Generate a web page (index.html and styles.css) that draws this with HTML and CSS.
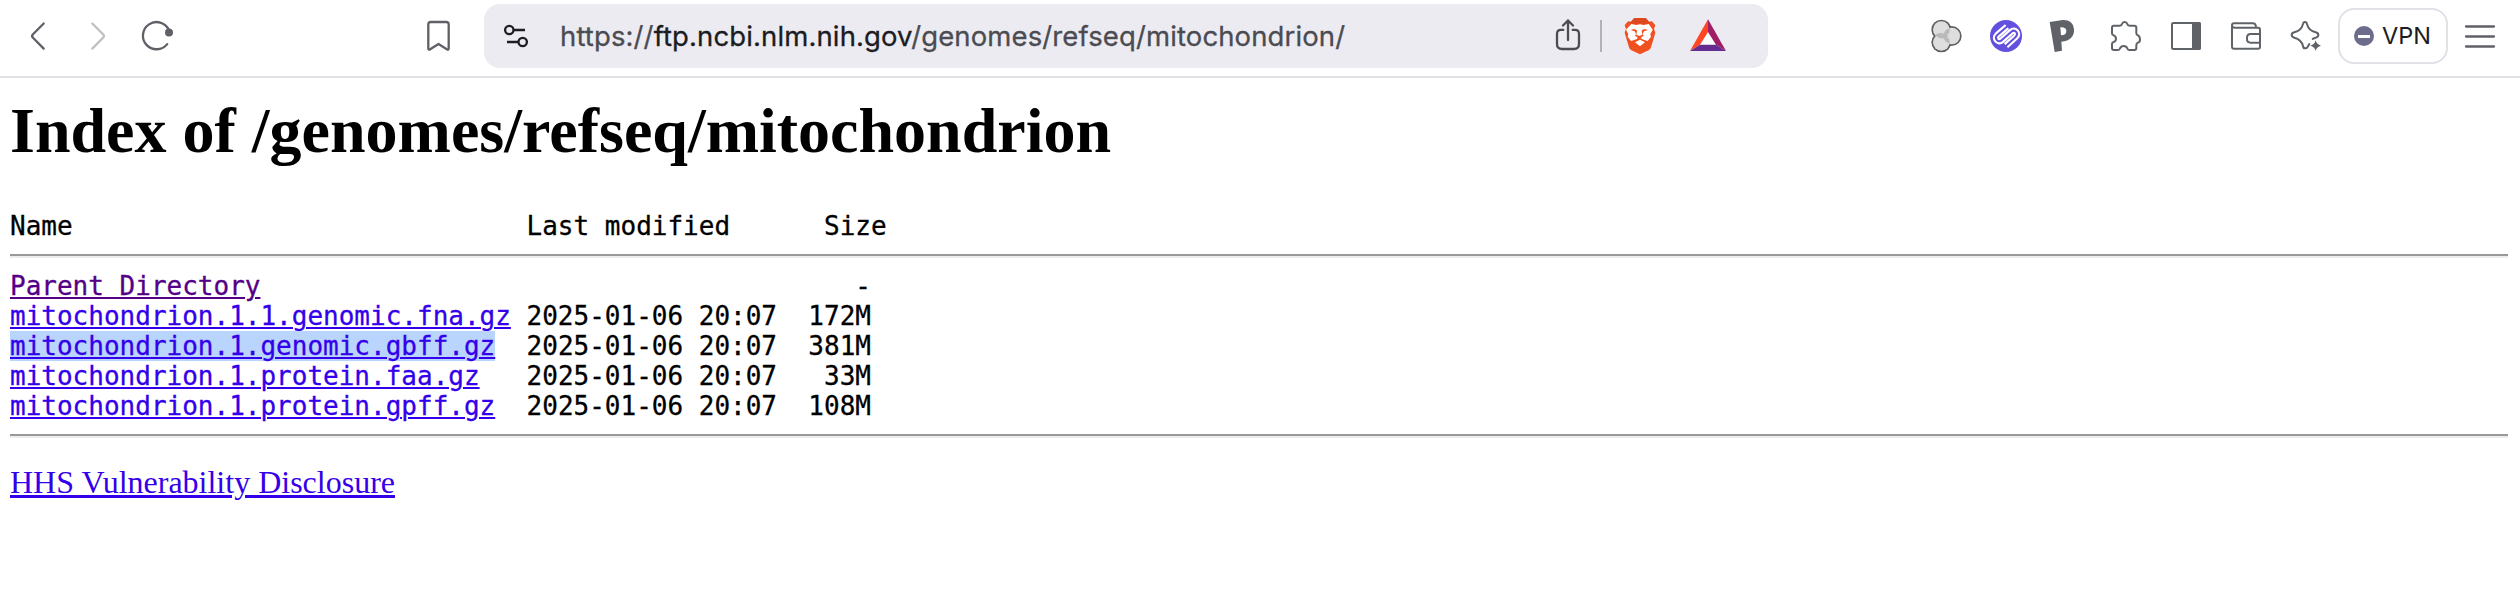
FILE: index.html
```html
<!DOCTYPE html>
<html lang="en">
<head>
<meta charset="utf-8">
<title>Index of /genomes/refseq/mitochondrion</title>
<link rel="stylesheet" href="styles.css">
</head>
<body>
<header class="toolbar">
  <nav class="group">
    <svg class="icon" viewBox="0 0 60 60"><path d="M35.700 17.500 25 28.200q-1.800 1.800 0 3.600L35.700 42.600"/></svg>
    <svg class="icon icon-disabled" viewBox="0 0 60 60"><path d="M24.300 17.500 35 28.200q1.800 1.800 0 3.600L24.300 42.600"/></svg>
    <svg class="icon" viewBox="0 0 60 60"><path d="M39.200 38.100A13.600 13.600 0 1 1 40.900 24"/><circle class="solid" cx="41" cy="26.500" r="4"/></svg>
  </nav>
  <svg class="icon bookmark" viewBox="0 0 60 60"><path d="M20.300 18.500q0-2.500 2.500-2.500h15.400q2.500 0 2.500 2.500v23.800q0 2.200-1.900.9L30.500 38l-8.300 5.200q-1.900 1.300-1.900-.9z"/></svg>
  <div class="address">
    <svg class="icon tune" viewBox="0 0 60 60"><circle cx="25.300" cy="24" r="4.200"/><path d="M29.500 24H41M23 36h11.500"/><circle cx="38.700" cy="36" r="4.200"/></svg>
    <span class="url">https://<span class="host">ftp.ncbi.nlm.nih.gov</span>/genomes/refseq/mitochondrion/</span>
    <svg class="icon share" viewBox="0 0 60 60"><path d="M25.300 23.900h-2.300q-4 0-4 4V38q0 5 5 5h12q5 0 5-5V27.900q0-4-4-4h-2.300M30 34V14.500M25 19.500l5-5 5 5"/></svg>
    <span class="divider"></span>
    <svg class="icon brave" viewBox="0 0 60 60"><g class="art" transform="translate(-110 -6) scale(.33333)">
      <path fill="#f1501f" d="M403 54h34l10 11 9-1 10 12-4 10 4 12-13 44q-2 6-7 9l-26 12-26-12q-5-3-7-9l-13-44 4-12-4-10 10-12 9 1z"/>
      <path fill="#dd4a20" d="M403 54h34l10 11 7 2-15 4-19-1-19 1-15-4 7-2z"/>
      <path fill="#fff" d="m394 72 15 3 11-2 11 2 15-3 12 17-7 14 2 7-10 13-12-4-7-3v-5l7-3-3-6 4-8 12-4-10-3-9 4 2 13-9 4-9-4 2-13-9-4-10 3 12 4 4 8-3 6 7 3v5l-7 3-12 4-10-13 2-7-7-14z"/>
      <path fill="#fff" d="m420 119 15 8-15 12-15-12z"/>
    </g></svg>
    <svg class="icon bat" viewBox="0 0 60 60"><g class="art" transform="translate(-178 -6) scale(.33333)">
      <path fill="#fff" d="m624 90 27 48h-54z"/><path fill="#ff4724" d="M624 58v38l-24 38-30 19z"/><path fill="#9e1f63" d="m624 58 54 95-30-19-24-38z"/><path fill="#662d91" d="m570 153 30-19h48l30 19z"/>
    </g></svg>
  </div>
  <div class="group extensions">
    <svg class="icon" viewBox="0 0 60 60"><g class="art" transform="translate(-16 -6) scale(.33333)">
      <g fill="#606060"><circle cx="124" cy="89" r="30"/><circle cx="155" cy="108" r="30"/><circle cx="124" cy="127" r="30"/></g>
      <g fill="#dedede"><circle cx="124" cy="89" r="25"/><circle cx="155" cy="108" r="25"/><circle cx="124" cy="127" r="25"/><path d="M112 90h24v36h-24z"/></g>
      <g fill="#bababa"><path d="M104 105q21-13 43 3-21 16-43-3z"/><path d="M131 107q0-18 18-22v8q0 11-18 14zM131 109q0 18 18 22v-8q0-11-18-14z"/></g>
    </g></svg>
    <svg class="icon" viewBox="0 0 60 60"><g class="art" transform="translate(-76 -6) scale(.33333)">
      <circle cx="318" cy="108" r="48" fill="#6450df"/>
      <g fill="none" stroke-linecap="butt">
        <path stroke="#fff" stroke-width="19" d="m321 80-29 25c-11 10 3 25 13 16l29-26c11-9 24 6 13 16l-29 26"/>
        <path stroke="#6450df" stroke-width="6" d="m324 77-32 28c-11 10 3 25 13 16l29-26c11-9 24 6 13 16l-32 29"/>
      </g>
    </g></svg>
    <svg class="icon" viewBox="0 0 60 60"><g class="art" transform="translate(-136 -6) scale(.33333)">
      <path fill="#5f6368" fill-rule="evenodd" d="m449 66 39-6q31-1 34 27 2 34-38 38l2 27-22 4zm32 16 2 24q16 0 16-13 0-12-18-11z"/>
    </g></svg>
    <svg class="icon" viewBox="0 0 60 60"><g class="art outline" transform="translate(-196 -6) scale(.33333)">
      <path d="M641 77h18q6 0 7-5 2-6 8-6t8 6q1 5 7 5h14q6 0 6 6v17q0 5 5 6 6 3 6 13 0 7-6 9-5 2-5 7v9q0 6-6 6h-15q-5 0-6-5-3-7-11-7t-11 7q-1 5-6 5h-12q-6 0-6-6v-12q0-5 5-6 7-3 7-10t-7-10q-5-1-5-6V83q0-6 5-6z"/>
    </g></svg>
    <svg class="icon" viewBox="0 0 60 60"><g class="art outline" transform="translate(-256 -6) scale(.33333)">
      <rect x="816" y="69" width="84" height="78" rx="4"/><path fill="#5f6368" d="M879 69h18q3 0 3 3v72q0 3-3 3h-18z"/>
    </g></svg>
    <svg class="icon" viewBox="0 0 60 60"><g class="art outline" transform="translate(-16 -6) scale(.33333)">
      <path d="M96 76q0-6 6-6h56q10 0 10 13M96 76q0 7 7 7h71q6 0 6 6v51q0 6-6 6h-72q-6 0-6-6zM180 102h-28q-11 0-11 11v5q0 10 11 10h28"/>
    </g></svg>
    <svg class="icon" viewBox="0 0 60 60"><g class="art outline" transform="translate(-76 -6) scale(.33333)">
      <path d="M328 132q-3 5-6 10-2 3-7 3t-6-7q-5-20-26-25-8-2-8-8t8-8q21-5 26-25 1-6 6-6t6 6q5 20 26 25 8 2 8 8t-8 8q-5 1-9 4"/><path class="spark" d="M347 121q3 13 16 16-13 3-16 16-3-13-16-16 13-3 16-16z"/>
    </g></svg>
  </div>
  <button class="vpn"><span class="vpn-dot"></span>VPN</button>
  <svg class="icon menu" viewBox="0 0 60 60"><path d="M16 20.500h28M16 30.500h28M16 40.500h28"/></svg>
</header>
<main class="page">
  <h1 class="title">Index of /genomes/refseq/mitochondrion</h1>
<pre class="listing">Name                             Last modified      Size<hr class="rule"><a class="visited" href="#">Parent Directory</a>                                      -
<a href="#">mitochondrion.1.1.genomic.fna.gz</a> 2025-01-06 20:07  172M
<a class="selected" href="#">mitochondrion.1.genomic.gbff.gz</a>  2025-01-06 20:07  381M
<a href="#">mitochondrion.1.protein.faa.gz</a>   2025-01-06 20:07   33M
<a href="#">mitochondrion.1.protein.gpff.gz</a>  2025-01-06 20:07  108M
<hr class="rule"></pre>
  <a class="disclosure" href="#">HHS Vulnerability Disclosure</a>
</main>
</body>
</html>
```
FILE: styles.css
```css
body {
  margin: 0;
  background: #fff;
  color: #000;
  font-family: "Liberation Serif", serif;
}

.toolbar {
  box-sizing: border-box;
  display: flex;
  align-items: center;
  height: 78px;
  padding: 0 10px 4px 8px;
  border-bottom: 2px solid #e2e1e8;
}

.group {
  display: flex;
}

.icon {
  flex: none;
  width: 60px;
  height: 60px;
  fill: none;
  stroke: #5f6166;
  stroke-width: 2.3;
  stroke-linecap: round;
  stroke-linejoin: round;
}

.icon-disabled {
  stroke: #bfc0c2;
}

.solid {
  fill: #5f6166;
  stroke: none;
}

.art {
  stroke: none;
}

.outline {
  stroke: #5f6368;
  stroke-width: 6;
}

.spark {
  fill: #5f6368;
  stroke: none;
}

.bookmark {
  margin-left: 220px;
}

.address {
  box-sizing: border-box;
  display: flex;
  align-items: center;
  width: 1284px;
  height: 64px;
  margin-left: 16px;
  padding-right: 30px;
  border-radius: 16px;
  background: #ecebf2;
}

.tune {
  stroke: #1d1d22;
  stroke-linecap: butt;
}

.url {
  flex: 1;
  margin-left: 16px;
  color: #4b4b51;
  font: 27.5px/36px Inter, sans-serif;
  letter-spacing: 0.12px;
  white-space: nowrap;
  -webkit-text-stroke: 0.3px;
}

.host {
  color: #1c1c22;
}

.share {
  stroke: #4c4c52;
}

.divider {
  width: 2px;
  height: 32px;
  margin-left: 2px;
  background: #b2b2b6;
}

.brave,
.bat {
  margin-left: 8px;
}

.extensions {
  margin-left: 148px;
}

.vpn {
  box-sizing: border-box;
  display: flex;
  align-items: center;
  gap: 8px;
  width: 110px;
  height: 56px;
  margin-left: 2px;
  padding: 0 0 0 14px;
  border: 2px solid #e2e1e8;
  border-radius: 16px;
  background: #fff;
  color: #1c1c22;
  font: 23.5px/30px Inter, sans-serif;
}

.vpn-dot {
  display: flex;
  align-items: center;
  justify-content: center;
  width: 20px;
  height: 20px;
  border-radius: 50%;
  background: #6b6d8a;
}

.vpn-dot::before {
  width: 12px;
  height: 3px;
  background: #fff;
  content: "";
}

.menu {
  margin-left: 2px;
}

.page {
  padding: 16px 12px 0 10px;
}

.title {
  margin: 0;
  font-size: 64px;
  line-height: 74px;
}

.listing {
  margin: 43px 0 0;
  font: 26px/30px "DejaVu Sans Mono", monospace;
  -webkit-text-stroke: 0.3px;
}

.rule {
  height: 2px;
  margin: 13px 0;
  border: 0;
  border-top: 2px solid #999;
  background: #ededed;
}

a {
  color: #3400eb;
  text-decoration-thickness: 2px;
  text-underline-offset: 2px;
}

.visited {
  color: #540087;
}

.selected {
  background: #b9d4fd;
}

.disclosure {
  display: inline-block;
  margin-top: 13px;
  font-size: 32px;
  line-height: 36px;
  text-decoration-thickness: 3px;
}
```
